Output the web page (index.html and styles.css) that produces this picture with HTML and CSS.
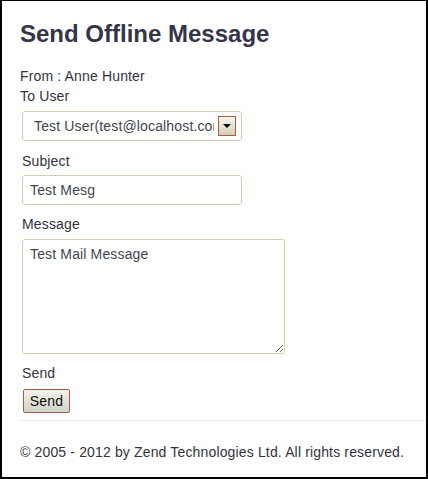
FILE: index.html
```html
<!DOCTYPE html>
<html>
<head>
<meta charset="utf-8">
<link rel="stylesheet" href="styles.css">
</head>
<body>
<div class="window">
  <h1 class="title">Send Offline Message</h1>
  <div class="line">From : Anne Hunter</div>
  <div class="line">To User</div>
  <form class="form">
    <div class="select-wrap">
      <select class="select"><option>Test User(test@localhost.com)</option></select>
      <span class="select-btn"><span class="tri"></span></span>
    </div>
    <label class="label label-subject">Subject</label>
    <input class="input" type="text" value="Test Mesg">
    <label class="label label-message">Message</label>
    <textarea class="textarea">Test Mail Message</textarea>
    <label class="label label-send">Send</label>
    <button class="btn" type="button">Send</button>
  </form>
  <div class="rule"></div>
  <div class="footer">© 2005 - 2012 by Zend Technologies Ltd. All rights reserved.</div>
</div>
</body>
</html>
```
FILE: styles.css
```css
html, body {
  margin: 0;
  padding: 0;
  background: #fff;
}
.window {
  box-sizing: border-box;
  width: 428px;
  height: 479px;
  border-top: 1px solid #000;
  border-left: 2px solid #000;
  border-right: 2px solid #000;
  border-bottom: 2px solid #000;
  padding: 18px 0 0 18px;
  font-family: "Liberation Sans", Arial, sans-serif;
  font-size: 14px;
  line-height: 20px;
  letter-spacing: 0.15px;
  color: #33333d;
  overflow: hidden;
}
.title {
  margin: 0 0 17px 0;
  font-size: 24px;
  line-height: 30px;
  font-weight: bold;
  letter-spacing: 0;
  color: #35354a;
}
.line {
  height: 20px;
}
.form {
  margin: 0;
  padding-left: 2px;
  display: flex;
  flex-direction: column;
  align-items: flex-start;
}
.select-wrap {
  position: relative;
  margin-top: 5px;
  width: 220px;
  height: 30px;
}
.select {
  -webkit-appearance: none;
  appearance: none;
  box-sizing: border-box;
  width: 220px;
  height: 30px;
  margin: 0;
  border: 1px solid #d8ccb2;
  border-radius: 3px;
  background: #fff;
  padding: 0 27px 0 11px;
  font-family: "Liberation Sans", Arial, sans-serif;
  font-size: 14px;
  letter-spacing: 0.15px;
  color: #444450;
  outline: none;
}
.select-btn {
  position: absolute;
  left: 196px;
  top: 5px;
  box-sizing: border-box;
  width: 18px;
  height: 20px;
  border: 1px solid #a45a48;
  background: linear-gradient(#f6f8ee, #e4e4d4 50%, #d6cbb2);
  display: flex;
  justify-content: center;
  align-items: center;
}
.tri {
  width: 0;
  height: 0;
  border-left: 4px solid transparent;
  border-right: 4px solid transparent;
  border-top: 4px solid #000;
}
.label {
  display: block;
  height: 20px;
}
.label-subject {
  margin-top: 10px;
}
.input {
  box-sizing: border-box;
  width: 220px;
  height: 30px;
  margin: 4px 0 0 0;
  border: 1px solid #d8ccb2;
  border-radius: 3px;
  padding: 0 7px;
  font-family: "Liberation Sans", Arial, sans-serif;
  font-size: 14px;
  letter-spacing: 0.15px;
  color: #444450;
  outline: none;
}
.label-message {
  margin-top: 9px;
}
.textarea {
  box-sizing: border-box;
  width: 263px;
  height: 115px;
  margin: 5px 0 0 0;
  border: 1px solid #d8ccb2;
  border-radius: 3px;
  padding: 4px 7px;
  font-family: "Liberation Sans", Arial, sans-serif;
  font-size: 14px;
  line-height: 20px;
  letter-spacing: 0.15px;
  color: #444450;
  outline: none;
}
.label-send {
  margin-top: 9px;
}
.btn {
  -webkit-appearance: none;
  appearance: none;
  box-sizing: border-box;
  width: 47px;
  height: 24px;
  margin: 6px 0 0 1px;
  padding: 0;
  border: 1px solid #a45a48;
  border-radius: 2px;
  background: linear-gradient(#f2f4ec, #e2e2d6 50%, #cfd3c8);
  font-family: "Liberation Sans", Arial, sans-serif;
  font-size: 14px;
  letter-spacing: 0.15px;
  color: #111;
}
.rule {
  margin-top: 7px;
  height: 1px;
  background: #e6efe6;
}
.footer {
  margin-top: 21px;
  height: 20px;
}
```
